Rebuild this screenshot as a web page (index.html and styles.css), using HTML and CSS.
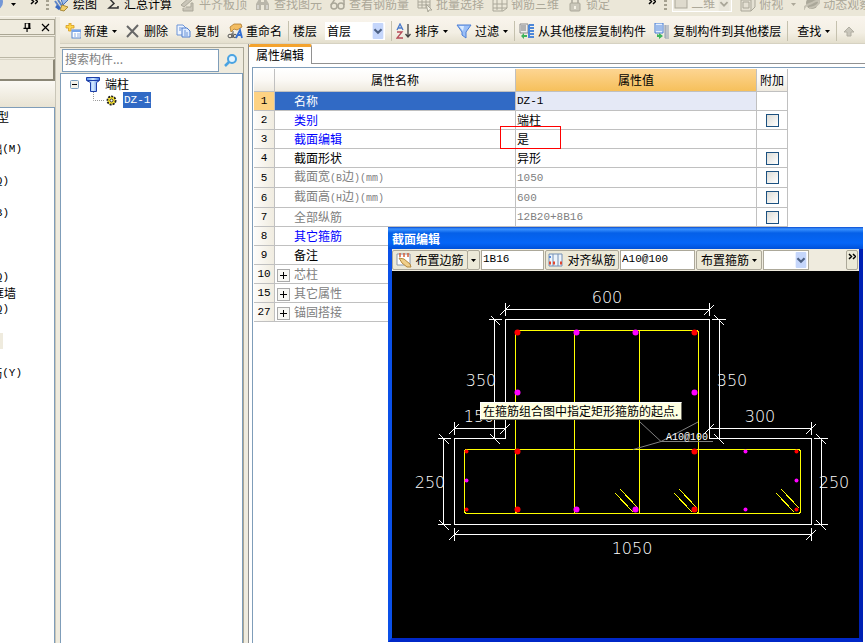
FILE: index.html
```html
<!DOCTYPE html>
<html lang="zh-CN">
<head>
<meta charset="utf-8">
<title>属性编辑</title>
<link rel="stylesheet" href="styles.css">
</head>
<body>
<svg class="defs" aria-hidden="true">
  <defs>
    <linearGradient id="blueFill" x1="0" y1="0" x2="1" y2="0"><stop offset="0" stop-color="#4f8df0"/><stop offset=".5" stop-color="#d8ecff"/><stop offset="1" stop-color="#3c74e0"/></linearGradient>
    <symbol id="caret" viewBox="0 0 5 3"><path d="M0 0h5L2.500 3z" fill="currentColor"/></symbol>
    <symbol id="chevron" viewBox="0 0 12 18"><rect width="12" height="18" rx="1" fill="#c5d6fb"/><path d="M2 7l4 4 4-4" fill="none" stroke="#4d6185" stroke-width="2.400"/></symbol>
    <symbol id="more" viewBox="0 0 8 8"><path d="M1 1l2.500 2.500L1 6M5 1l2.500 2.500L5 6" fill="none" stroke="#000" stroke-width="1.500"/></symbol>
    <symbol id="floors" viewBox="0 0 16 16"><path d="M10 2h5M10 5h5M10 8h5M10 11h5M10 14h5M10 2v13" stroke="#4d87d8" stroke-width="2" fill="none"/></symbol>
  </defs>
</svg>

<header class="topbar">
  <button class="tool first" aria-label="视图"><svg class="icon" viewBox="0 0 16 16"><circle cx="8" cy="6" r="8" fill="#7397d6"/><circle cx="7" cy="5" r="5" fill="#b8cdf2"/></svg></button>
  <svg class="caret"><use href="#caret"/></svg>
  <svg class="more"><use href="#more"/></svg>
  <span class="grip"></span>
  <button class="tool"><svg class="icon" viewBox="0 0 16 16"><path d="M1 5l5 7M4 4l4 6" stroke="#5f86c8" stroke-width="2"/><path d="M7 3l5-3 2 4-5 5z" fill="#9ab9e8" stroke="#476fb5"/><path d="M8 9l6 2-4 4-4-1z" fill="#f0cd68" stroke="#a98a3a"/><path d="M2 10l4 3" stroke="#3969c0" stroke-width="3"/></svg><span>绘图</span></button>
  <button class="tool"><svg class="icon" viewBox="0 0 16 16"><path d="M13 4V2H4l5 5.500L4 12h9v-2" fill="none" stroke="#333" stroke-width="1.500"/></svg><span>汇总计算</span></button>
  <button class="tool off"><svg class="icon" viewBox="0 0 16 16"><path d="M1 9l9-8 2 3-8 7zM3 12v3h10V7h-2v4H6" fill="#c9c5b8" stroke="#aaa799"/></svg><span>平齐板顶</span></button>
  <button class="tool off"><svg class="icon" viewBox="0 0 16 16"><path d="M1 14V8l3-5h2v11zM9 14V3h2l3 5v6zM6 6h3v3H6z" fill="#b9b6aa"/><path d="M3 9v4M12 9v4" stroke="#eee"/></svg><span>查找图元</span></button>
  <button class="tool off"><svg class="icon" viewBox="0 0 16 16"><g fill="none" stroke="#aaa799" stroke-width="1.500"><circle cx="4" cy="10" r="3"/><circle cx="11" cy="10" r="3"/><path d="M1 9l4-6M14 9V4l-3-1"/></g></svg><span>查看钢筋量</span></button>
  <button class="tool off"><svg class="icon" viewBox="0 0 16 16"><path d="M1 3h12v9H1zM1 6h12M1 9h12M5 3v9M9 3v9" fill="none" stroke="#aaa799"/><path d="M9 8l6 6-3 0-1 2z" fill="#f4f1e5" stroke="#aaa799"/></svg><span>批量选择</span></button>
  <button class="tool off"><svg class="icon" viewBox="0 0 16 16"><path d="M1 4l4-2h10v10l-4 3H1zM1 8h14M5 2v12M10 3v12M1 12h14" fill="none" stroke="#aaa799"/></svg><span>钢筋三维</span></button>
  <button class="tool off"><svg class="icon" viewBox="0 0 16 16"><path d="M5 8V4q3-5 6 0v4" fill="none" stroke="#b9b6aa" stroke-width="2"/><rect x="3" y="7" width="10" height="8" rx="1" fill="#cbc8bb" stroke="#aaa799"/><path d="M8 10v3" stroke="#f4f1e5" stroke-width="2"/></svg><span>锁定</span></button>
  <svg class="more push"><use href="#more"/></svg>
  <span class="grip"></span>
  <span class="combo view-combo"><svg class="icon" viewBox="0 0 16 16"><rect x="2" y="1" width="12" height="12" fill="#dedacd" stroke="#aaa799"/></svg><select aria-label="视图模式" disabled><option>二维</option></select><svg class="chev" viewBox="0 0 12 18"><rect width="12" height="18" fill="#e9e6da"/><path d="M2 8l4 4 4-4" fill="none" stroke="#aaa799" stroke-width="2"/></svg></span>
  <button class="tool off"><svg class="icon" viewBox="0 0 16 16"><path d="M1 4l4-4h10v11l-4 4H1zM1 4h10v11M11 4l4-4M3 6h6v6H3z" fill="#e4e0d3" stroke="#aaa799"/></svg><span>俯视</span></button>
  <svg class="caret off"><use href="#caret"/></svg>
  <button class="tool off"><svg class="icon" viewBox="0 0 16 16"><circle cx="8" cy="7" r="6" fill="#aaa799"/><path d="M0 14Q-1 10 8 7q9-5 7 0-3 4-10 5" fill="none" stroke="#c4c0b2" stroke-width="2"/></svg><span>动态观察</span></button>
</header>

<div class="workspace">
  <aside class="modules">
    <div class="dock-title">
      <button aria-label="固定"><svg viewBox="0 0 9 10"><path d="M2 0h5v6M2 0v6M6 0v6M0 6h8M4 6v4" fill="none" stroke="#000" stroke-width="1.300"/></svg></button>
      <button aria-label="关闭"><svg viewBox="0 0 9 9"><path d="M1 1l7 7M8 1L1 8" stroke="#000" stroke-width="1.200"/></svg></button>
    </div>
    <button class="module-tab" aria-label="工程设置"></button>
    <button class="module-tab pressed" aria-label="绘图输入"></button>
    <div class="module-strip"></div>
    <ul class="module-list">
      <li class="end-a">型</li><li></li>
      <li class="end-c">础<span class="code">(M)</span></li><li></li>
      <li class="end-a code">(Q)</li><li></li>
      <li class="end-a code">(B)</li><li></li><li></li><li></li>
      <li class="end-a code">(Q)</li>
      <li class="end-b">框墙</li>
      <li class="end-a code">(Q)</li><li></li>
      <li class="current"></li><li></li>
      <li class="end-c">筋<span class="code">(Y)</span></li>
    </ul>
  </aside>

  <main class="main">
    <nav class="toolbar">
      <button class="tool"><svg class="icon" viewBox="0 0 16 16"><path d="M4 0h2v2.500H9v2.500H6v3H3.500V5H1V2.500h3z" fill="#ffd84c" stroke="#d69b20" stroke-width=".8"/><rect x="7" y="7" width="9" height="8" fill="#fff" stroke="#5787d2"/><path d="M7 8h9" stroke="#76a4ea" stroke-width="2"/><path d="M9 11h2M12 11h3M9 13h2M12 13h3" stroke="#8fb0e4"/></svg><span>新建</span><svg class="caret"><use href="#caret"/></svg></button>
      <button class="tool"><svg class="icon" viewBox="0 0 16 16"><path d="M2 3l11 11M13 2L2 14" stroke="#686868" stroke-width="2"/></svg><span>删除</span></button>
      <button class="tool"><svg class="icon" viewBox="0 0 16 16"><path d="M1 2h6l3 3v7H1z" fill="#eef5ff" stroke="#6c94d6"/><path d="M6 5h5l3 3v6H6z" fill="#deebff" stroke="#4e7ccc"/><path d="M3 5h3M3 7h2M8 8h2M8 10h4M8 12h4" stroke="#6c94d6"/></svg><span>复制</span></button>
      <button class="tool"><svg class="icon" viewBox="0 0 16 16"><path d="M3 4l4-3h7l1 3-5 3-3-1-3 3z" fill="#f3bd62" stroke="#b07b2e" stroke-width=".8"/><g fill="none"><ellipse cx="3" cy="13" rx="2" ry="1.800" stroke="#555"/><path d="M5 10v5M6 8v7" stroke="#555"/><ellipse cx="8" cy="13" rx="1.500" ry="1.800" stroke="#555"/><path d="M9 15l4-8 2 8M11 12h4" stroke="#346fd2" stroke-width="1.800"/></g></svg><span>重命名</span></button>
      <span class="sep"></span>
      <label for="floor">楼层</label>
      <span class="combo"><select id="floor"><option>首层</option></select><svg class="chev"><use href="#chevron"/></svg></span>
      <span class="sep"></span>
      <button class="tool"><svg class="icon" viewBox="0 0 16 16"><path d="M1 7l3-6 3 6M2 5h4" fill="none" stroke="#4a79c9" stroke-width="1.300"/><path d="M1 9h5l-5 6h6" fill="none" stroke="#b64b58" stroke-width="1.300"/><path d="M12 1v13M9.500 11l2.500 3 2.500-3" fill="none" stroke="#444" stroke-width="1.300"/></svg><span>排序</span><svg class="caret"><use href="#caret"/></svg></button>
      <button class="tool"><svg class="icon" viewBox="0 0 16 16"><path d="M1 2h14L10 9v6l-4-3V9z" fill="#9cc0f7" stroke="#4d7fd5"/><path d="M3 3h5L7 8z" fill="#dcecff"/></svg><span>过滤</span><svg class="caret"><use href="#caret"/></svg></button>
      <span class="sep"></span>
      <button class="tool"><svg class="icon" viewBox="0 0 16 16"><path d="M1 1h8v9H1z" fill="#eee" stroke="#8a8a8a"/><path d="M2 3h5M2 5h5M2 7h5" stroke="#777"/><use href="#floors"/><path d="M2 13l3-3v2h3v2H5v2z" fill="#3cb45a"/></svg><span>从其他楼层复制构件</span></button>
      <button class="tool"><svg class="icon" viewBox="0 0 16 16"><path d="M1 0h8v10H1z" fill="#e3eeff" stroke="#447bd2"/><path d="M2 3h6M2 5h6M2 7h6" stroke="#5b8bd8"/><path d="M11 3h4M11 5h4M11 7h4M11 9h4M11 11h4M11 13h4M11 15h4M11 2v13" stroke="#8b98ad"/><path d="M3 11v3h2v2l4-3-4-3v2z" fill="#3cb45a"/></svg><span>复制构件到其他楼层</span></button>
      <span class="sep"></span>
      <button class="tool text-only"><span>查找</span><svg class="caret"><use href="#caret"/></svg></button>
      <span class="sep"></span>
      <button class="tool" aria-label="上移"><svg class="icon" viewBox="0 0 16 16"><path d="M8 4l5 5h-3v4H6V9H3z" fill="#c9c6bb" stroke="#b1aea2"/></svg></button>
    </nav>

    <div class="panels">
      <section class="components">
        <form class="search">
          <input type="text" placeholder="搜索构件..." aria-label="搜索构件">
          <button type="button" aria-label="搜索"><svg viewBox="0 0 14 14"><circle cx="8" cy="5" r="4" fill="#e4f4ff" stroke="#4aa3e2" stroke-width="2"/><path d="M5 8l-4 4" stroke="#4aa3e2" stroke-width="2.500"/></svg></button>
        </form>
        <ul class="tree">
          <li>
            <div class="node">
              <svg class="toggle" viewBox="0 0 9 9"><rect x=".5" y=".5" width="8" height="8" rx="1" fill="#f4f2ea" stroke="#7b9ebd"/><path d="M2 4.500h5" stroke="#000"/></svg>
              <svg class="column-icon" viewBox="0 0 14 15"><path d="M.5.5h13v3l-3 2v9h-6v-9l-4-2z" fill="url(#blueFill)" stroke="#1d3fa8"/><path d="M1 3.500h12" stroke="#1d3fa8"/></svg>
              <span>端柱</span>
            </div>
            <ul>
              <li class="node leaf">
                <svg class="branch" viewBox="0 0 12 16"><path d="M.5 0v8.500H12" fill="none" stroke="#999" stroke-dasharray="1 1"/></svg>
                <svg class="gear" viewBox="0 0 11 11"><circle cx="5.500" cy="5.500" r="4" fill="#ffe92e" stroke="#222" stroke-width="2" stroke-dasharray="2 1"/><circle cx="5.500" cy="5.500" r="3" fill="#ffe92e"/><circle cx="5.500" cy="5.500" r="1.500" fill="#fff" stroke="#333"/></svg>
                <span class="picked code">DZ-1</span>
              </li>
            </ul>
          </li>
        </ul>
      </section>

      <section class="properties">
        <div class="tabs"><button class="tab">属性编辑</button><span class="tab-line"></span></div>
        <div class="sheet">
          <table>
            <colgroup><col class="c-no"><col class="c-name"><col class="c-value"><col class="c-extra"></colgroup>
            <thead><tr><th></th><th>属性名称</th><th class="hot">属性值</th><th>附加</th></tr></thead>
            <tbody>
              <tr class="selected"><th>1</th><td>名称</td><td class="code">DZ-1</td><td></td></tr>
              <tr class="key"><th>2</th><td>类别</td><td>端柱</td><td><input type="checkbox" aria-label="附加 类别"></td></tr>
              <tr class="key"><th>3</th><td>截面编辑</td><td class="marked">是</td><td></td></tr>
              <tr><th>4</th><td>截面形状</td><td>异形</td><td><input type="checkbox" aria-label="附加 截面形状"></td></tr>
              <tr class="dim"><th>5</th><td>截面宽<span class="code">(B</span>边<span class="code">)(mm)</span></td><td class="code">1050</td><td><input type="checkbox" aria-label="附加 截面宽"></td></tr>
              <tr class="dim"><th>6</th><td>截面高<span class="code">(H</span>边<span class="code">)(mm)</span></td><td class="code">600</td><td><input type="checkbox" aria-label="附加 截面高"></td></tr>
              <tr class="dim"><th>7</th><td>全部纵筋</td><td class="code">12B20+8B16</td><td><input type="checkbox" aria-label="附加 全部纵筋"></td></tr>
              <tr class="key"><th>8</th><td>其它箍筋</td><td></td><td></td></tr>
              <tr><th>9</th><td>备注</td><td></td><td></td></tr>
              <tr class="dim group"><th>10</th><td><button aria-label="展开"></button>芯柱</td><td></td><td></td></tr>
              <tr class="dim group"><th>15</th><td><button aria-label="展开"></button>其它属性</td><td></td><td></td></tr>
              <tr class="dim group"><th>27</th><td><button aria-label="展开"></button>锚固搭接</td><td></td><td></td></tr>
            </tbody>
          </table>
        </div>
      </section>
    </div>
  </main>
</div>

<section class="dialog" role="dialog" aria-labelledby="dialog-title">
  <h2 id="dialog-title">截面编辑</h2>
  <div class="dialog-bar">
    <button class="raised edge"><svg class="icon" viewBox="0 0 16 16"><path d="M1 2h13v11H1z" fill="#fff" stroke="#8a97aa"/><path d="M4 1v4M8 1v4M12 1v4" stroke="#d7603a" stroke-width="1.500"/><path d="M3 6l5 1 6 5 1 3-4 0-5-4z" fill="#f0cf8a" stroke="#b58a3f"/></svg><span>布置边筋</span></button>
    <button class="raised drop" aria-label="更多边筋"><svg class="caret"><use href="#caret"/></svg></button>
    <input class="code edge-input" type="text" value="1B16" aria-label="边筋">
    <button class="raised align"><svg class="icon" viewBox="0 0 16 16"><path d="M1 2h13v12H1zM5 2v12M10 2v12" fill="#edf4fb" stroke="#7590b5"/><path d="M1 11h2M5 11h2M12 11h2" stroke="#e0472e" stroke-width="3"/><path d="M1 5h2" stroke="#5b8bd8" stroke-width="2"/></svg><span>对齐纵筋</span></button>
    <input class="code hoop-input" type="text" value="A10@100" aria-label="箍筋">
    <button class="raised hoop"><span>布置箍筋</span><svg class="caret"><use href="#caret"/></svg></button>
    <span class="combo hoop-combo"><select aria-label="箍筋类型"><option></option></select><svg class="chev"><use href="#chevron"/></svg></span>
    <button class="raised overflow" aria-label="更多"><svg class="more"><use href="#more"/></svg></button>
  </div>
  <div class="canvas">
    <svg viewBox="392 271 467 367" preserveAspectRatio="xMinYMin meet">
      <g fill="none" stroke="#fff" shape-rendering="crispEdges">
        <path d="M505.500 319.500H709.500V438.500H811.500V524.500H454.500V438.500H505.500z"/>
        <path d="M505.500 309.500H709.500M505.500 303V316M709.500 303V316M454.500 428.500H505.500M454.500 422V435M505.500 422V438M709.500 428.500H811.500M709.500 422V438M811.500 422V435M454.500 534.500H811.500M454.500 528V541M811.500 528V541"/>
        <path d="M494.500 319.500V438.500M489 319.500H502M489 438.500H502M719.500 319.500V438.500M712 319.500H726M712 438.500H726M443.500 438.500V524.500M438 438.500H451M438 524.500H451M821.500 438.500V524.500M814 438.500H828M814 524.500H828"/>
        <path d="M500 315l10-10M704 315l10-10M449 434l10-10M500 434l10-10M704 434l10-10M806 434l10-10M449 540l10-10M806 540l10-10"/>
        <path d="M491 316l9 9M490 434l10 10M714 315l10 10M714 434l10 10M439 434l10 10M439 520l10 10M816 434l10 10M816 520l10 10"/>
      </g>
      <g fill="none" stroke="#ff0" shape-rendering="crispEdges">
        <path d="M517 330.500H697L698.500 332V512L697 513.500H517L515.500 512V332z"/>
        <path d="M574.500 331V513M639.500 331V513"/>
        <path d="M466 449.500H799L800.500 451V512L799 513.500H466L464.500 512V451z"/>
        <path d="M615 493l18 19M620 489l18 19M674 493l18 19M679 489l18 19M776 493l18 19M781 489l18 19"/>
      </g>
      <g fill="none" stroke="#808080"><path d="M640 422l21 19.500L698 422M661 441.500l-28 8M661 441.500h52"/></g>
      <g fill="#f00">
        <circle cx="517.500" cy="332.500" r="3"/><circle cx="694.500" cy="332.500" r="3"/><circle cx="517.500" cy="451.500" r="3"/><circle cx="694.500" cy="451.500" r="3"/><circle cx="517.500" cy="509.500" r="3"/><circle cx="694.500" cy="509.500" r="3"/>
        <circle cx="466.500" cy="451.500" r="2"/><circle cx="466.500" cy="509.500" r="2"/><circle cx="796.500" cy="451.500" r="2"/><circle cx="796.500" cy="509.500" r="2"/>
      </g>
      <g fill="#f0f">
        <circle cx="576.500" cy="332.500" r="3"/><circle cx="635.500" cy="332.500" r="3"/><circle cx="517.500" cy="392.500" r="3"/><circle cx="694.500" cy="392.500" r="3"/><circle cx="576.500" cy="509.500" r="3"/><circle cx="635.500" cy="509.500" r="3"/>
        <circle cx="466.500" cy="480.500" r="2"/><circle cx="745.500" cy="451.500" r="2"/><circle cx="745.500" cy="509.500" r="2"/><circle cx="796.500" cy="480.500" r="2"/>
      </g>
      <g class="dims">
        <text x="607" y="303">600</text><text x="481" y="386">350</text><text x="732" y="386">350</text><text x="479" y="422">150</text><text x="760" y="422">300</text><text x="430" y="488">250</text><text x="834" y="488">250</text><text x="632" y="554">1050</text>
      </g>
      <text class="hoop-label" x="666" y="440">A10@100</text>
    </svg>
    <div class="tip" role="tooltip">在箍筋组合图中指定矩形箍筋的起点.</div>
  </div>
</section>
</body>
</html>
```
FILE: styles.css
```css
*, *::after { box-sizing: border-box; }

body {
  margin: 0;
  height: 100vh;
  display: flex;
  flex-direction: column;
  position: relative;
  overflow: hidden;
  background: #efebde;
  color: #000;
  font: 12px/16px "Noto Sans CJK SC", sans-serif;
  white-space: nowrap;
}

button, input, select {
  font: inherit;
  color: inherit;
  margin: 0;
  padding: 0;
  border: 0;
  border-radius: 0;
  background: none;
}

ul { list-style: none; margin: 0; padding: 0; }
svg { display: block; flex: none; }

.defs { position: absolute; width: 0; height: 0; }
.code { font-family: "Liberation Mono", "Noto Sans CJK SC", monospace; font-size: 11px; }
td > span.code { font-size: 10px; }
.icon { width: 16px; height: 16px; }
.caret { width: 5px; height: 3px; }
.more { width: 8px; height: 8px; }

.tool {
  display: flex;
  flex: none;
  align-items: center;
  gap: 3px;
}
.tool .caret { margin-left: 1px; }
.off { color: #aca899; }

/* application toolbar, scrolled partly out of view */
.topbar {
  flex: none;
  height: 17px;
  display: flex;
  align-items: flex-end;
  gap: 8px;
  padding-bottom: 4px;
  overflow: hidden;
  background: #ebe7d8;
  border-bottom: 1px solid #f8f5ec;
}
.topbar .first { margin-left: -13px; }
.topbar .caret { margin-bottom: 6px; }
.topbar .more { margin: 0 0 6px 6px; }
.topbar .more.push { margin-left: 30px; }
.grip {
  width: 3px;
  height: 16px;
  margin-right: -3px;
  flex: none;
  background: repeating-linear-gradient(#a5a190 0 2px, transparent 2px 4px);
}

.combo {
  display: flex;
  flex: none;
  align-items: center;
  width: 60px;
  height: 18px;
  padding-right: 1px;
  background: #fff;
}
.combo select {
  flex: 1;
  min-width: 0;
  height: 16px;
  padding-left: 2px;
  appearance: none;
  opacity: 1;
}
.chev { width: 12px; height: 16px; pointer-events: none; }
.view-combo {
  background: #f0ede2;
  border: 1px solid #fff;
  color: #aca899;
}

.workspace { flex: 1; min-height: 0; display: flex; gap: 4px; }

/* docked module list */
.modules {
  flex: none;
  width: 56px;
  display: flex;
  flex-direction: column;
  overflow: hidden;
  border-right: 1px solid #c9c6b8;
}
.dock-title {
  height: 16px;
  margin-top: 2px;
  display: flex;
  justify-content: flex-end;
  align-items: center;
  gap: 9px;
  padding-right: 4px;
  border: 1px solid #aaa694;
  border-left: 0;
}
.dock-title svg { width: 9px; height: 9px; }
.module-tab {
  height: 22px;
  margin-top: 1px;
  border: 1px solid #bbb7a6;
  border-left: 0;
}
.module-tab.pressed { border-width: 1px 2px 2px 0; border-color: #d8d4c5 #8b8776 #8b8776; }
.module-strip { height: 26px; background: linear-gradient(#fbf9f4, #e8e3d3); }
.module-list {
  flex: 1;
  padding-top: 1px;
  background: #fff;
  border: solid #7f9db9;
  border-width: 1px 1px 0 0;
}
.module-list li {
  height: 16px;
  display: flex;
  justify-content: flex-end;
}
.module-list .end-a { padding-right: 45px; }
.module-list .end-b { padding-right: 38px; }
.module-list .end-c { padding-right: 32px; }
.module-list .current { width: 3px; background: #efebde; }

.main { flex: 1; min-width: 0; display: flex; flex-direction: column; }

.toolbar {
  flex: none;
  height: 27px;
  display: flex;
  align-items: center;
  gap: 8px;
  padding: 2px 5px 0;
  overflow: hidden;
  background: linear-gradient(#f9f4ec, #f3efe4 60%, #e4dfcd);
  border-bottom: 1px solid #d6d2c2;
}
.sep { width: 1px; height: 20px; flex: none; margin: 0 -4px 0 -2px; background: #c5c1ae; }
.text-only { padding-left: 5px; }

.panels { flex: 1; min-height: 0; display: flex; gap: 4px; }

/* component tree */
.components {
  flex: none;
  width: 184px;
  margin-top: 3px;
  display: flex;
  flex-direction: column;
  border: solid #a9a695;
  border-width: 1px 1px 0 0;
}
.search { display: flex; height: 25px; padding: 1px 0 1px 2px; }
.search input {
  width: 157px;
  padding: 0 2px 3px;
  background: #fff;
  border: 1px solid #7f9db9;
}
.search input::placeholder { color: #808080; opacity: 1; }
.search button { padding-left: 5px; }
.search svg { width: 14px; height: 14px; }
.tree {
  flex: 1;
  padding: 2px 0 0 9px;
  background: #fff;
  border: solid #7f9db9;
  border-width: 1px 1px 0;
}
.node { display: flex; align-items: center; height: 16px; }
.toggle { width: 9px; height: 9px; }
.column-icon { width: 14px; height: 15px; margin: 0 5px 0 7px; }
.leaf { padding-left: 23px; }
.branch { width: 12px; height: 16px; }
.gear { width: 11px; height: 11px; margin: 0 6px 0 1px; }
.picked { padding: 0 1px; background: #316ac5; color: #fff; }

/* property sheet */
.properties {
  flex: 1;
  min-width: 0;
  display: flex;
  flex-direction: column;
  background: #fff;
  border-left: 1px solid #8f8f8f;
}
.tabs { display: flex; height: 20px; }
.tab {
  width: 63px;
  padding-bottom: 3px;
  border: solid #919191;
  border-width: 3px 1px 0 0;
  border-top-color: #f4a32e;
  border-radius: 2px 2px 0 0;
}
.tab-line { flex: 1; border-bottom: 1px solid #919191; }
.sheet {
  flex: 1;
  margin: 3px 0 0 3px;
  padding: 1px 0 0 1px;
  border: solid #7f9db9;
  border-width: 1px 0 0 1px;
}
table { table-layout: fixed; border-collapse: separate; border-spacing: 0; width: 534px; }
.c-no { width: 21px; }
.c-name, .c-value { width: 241px; }
.c-extra { width: 31px; }
th, td {
  height: 19px;
  padding: 0;
  font-weight: normal;
  line-height: 16px;
  border: solid #c0c0c0;
  border-width: 0 1px 1px 0;
}
thead th { height: 23px; background: linear-gradient(#fff, #fbf9f5 50%, #efeadf); }
thead .hot { background: linear-gradient(#fdd592, #f6c05b); }
tbody th {
  background: linear-gradient(90deg, #fdfcfa, #f0ece0);
  font-family: "Liberation Mono", monospace;
  font-size: 11px;
}
td:nth-child(2) { padding-left: 19px; }
td:nth-child(3) { padding-left: 1px; }
td:nth-child(4) { text-align: center; }
.selected th { background: #fdd283; }
.selected td:nth-child(2) { background: #316ac5; color: #fff; }
.selected td:nth-child(3) { background: #e5e9f6; }
.key td:nth-child(2) { color: #00f; }
.dim td { color: #808080; }
.group td:nth-child(2) { padding-left: 2px; }
.group button {
  display: inline-block;
  width: 13px;
  height: 13px;
  margin-right: 4px;
  vertical-align: -2px;
  border: 1px solid #aaa;
  background:
    linear-gradient(#000, #000) center / 7px 1px no-repeat,
    linear-gradient(#000, #000) center / 1px 7px no-repeat,
    #f7f7f4;
}
td input {
  display: block;
  width: 13px;
  height: 13px;
  margin: 0 auto;
  appearance: none;
  border: 1px solid #1c5180;
  background: linear-gradient(135deg, #dcdcd7, #fff);
}
.marked { position: relative; }
.marked::after {
  content: "";
  position: absolute;
  left: -16px;
  top: -4px;
  width: 61px;
  height: 23px;
  border: 1px solid #f00;
}

/* floating section editor */
.dialog {
  position: absolute;
  right: 2px;
  bottom: 1px;
  width: 475px;
  height: 415px;
  display: flex;
  flex-direction: column;
  border: solid #0831d9;
  border-width: 0 4px 4px;
  border-color: #0a50e8 #0020b4 #0028c8 #0a50e8;
  background: #efebde;
}
.dialog h2 {
  flex: none;
  height: 22px;
  margin: 0 -4px;
  padding: 3px 4px 0;
  color: #fff;
  font-size: 12px;
  line-height: 18px;
  background: linear-gradient(#0a4cd0, #3b92ff 2px, #0560e8 6px, #0566f8 16px, #0050d8);
}
.dialog-bar { flex: none; height: 22px; display: flex; gap: 1px; padding: 1px 1px 1px 0; }
.raised {
  display: flex;
  align-items: center;
  justify-content: center;
  gap: 3px;
  background: #ece9d8;
  border: 1px solid #aca899;
  border-radius: 2px;
}
.dialog-bar .edge { width: 76px; margin-right: -2px; }
.dialog-bar .drop { width: 13px; }
.dialog-bar .align { width: 74px; }
.dialog-bar .hoop { width: 66px; }
.dialog-bar input { padding: 0 1px 3px; background: #fff; border: 1px solid #aca899; }
.dialog-bar .edge-input { width: 63px; }
.dialog-bar .hoop-input { width: 75px; }
.dialog-bar .hoop-combo { width: 46px; height: 20px; border: 1px solid #aca899; }
.dialog-bar .overflow { width: 12px; margin-left: auto; align-items: flex-start; padding-top: 2px; }
.canvas { flex: 1; min-height: 0; position: relative; background: #000; }
.canvas svg { width: 100%; height: 100%; }
.dims { fill: #fff; font-family: "DejaVu Sans", sans-serif; font-weight: 200; font-size: 16px; text-anchor: middle; }
.hoop-label { fill: #fff; font-family: "Liberation Mono", monospace; font-size: 10px; }
.tip {
  position: absolute;
  left: 88px;
  top: 131px;
  height: 18px;
  padding: 0 3px 0 2px;
  background: #ffffe1;
  border: 1px solid #fff;
  border-right-color: #716f64;
  border-bottom-color: #716f64;
}
```
